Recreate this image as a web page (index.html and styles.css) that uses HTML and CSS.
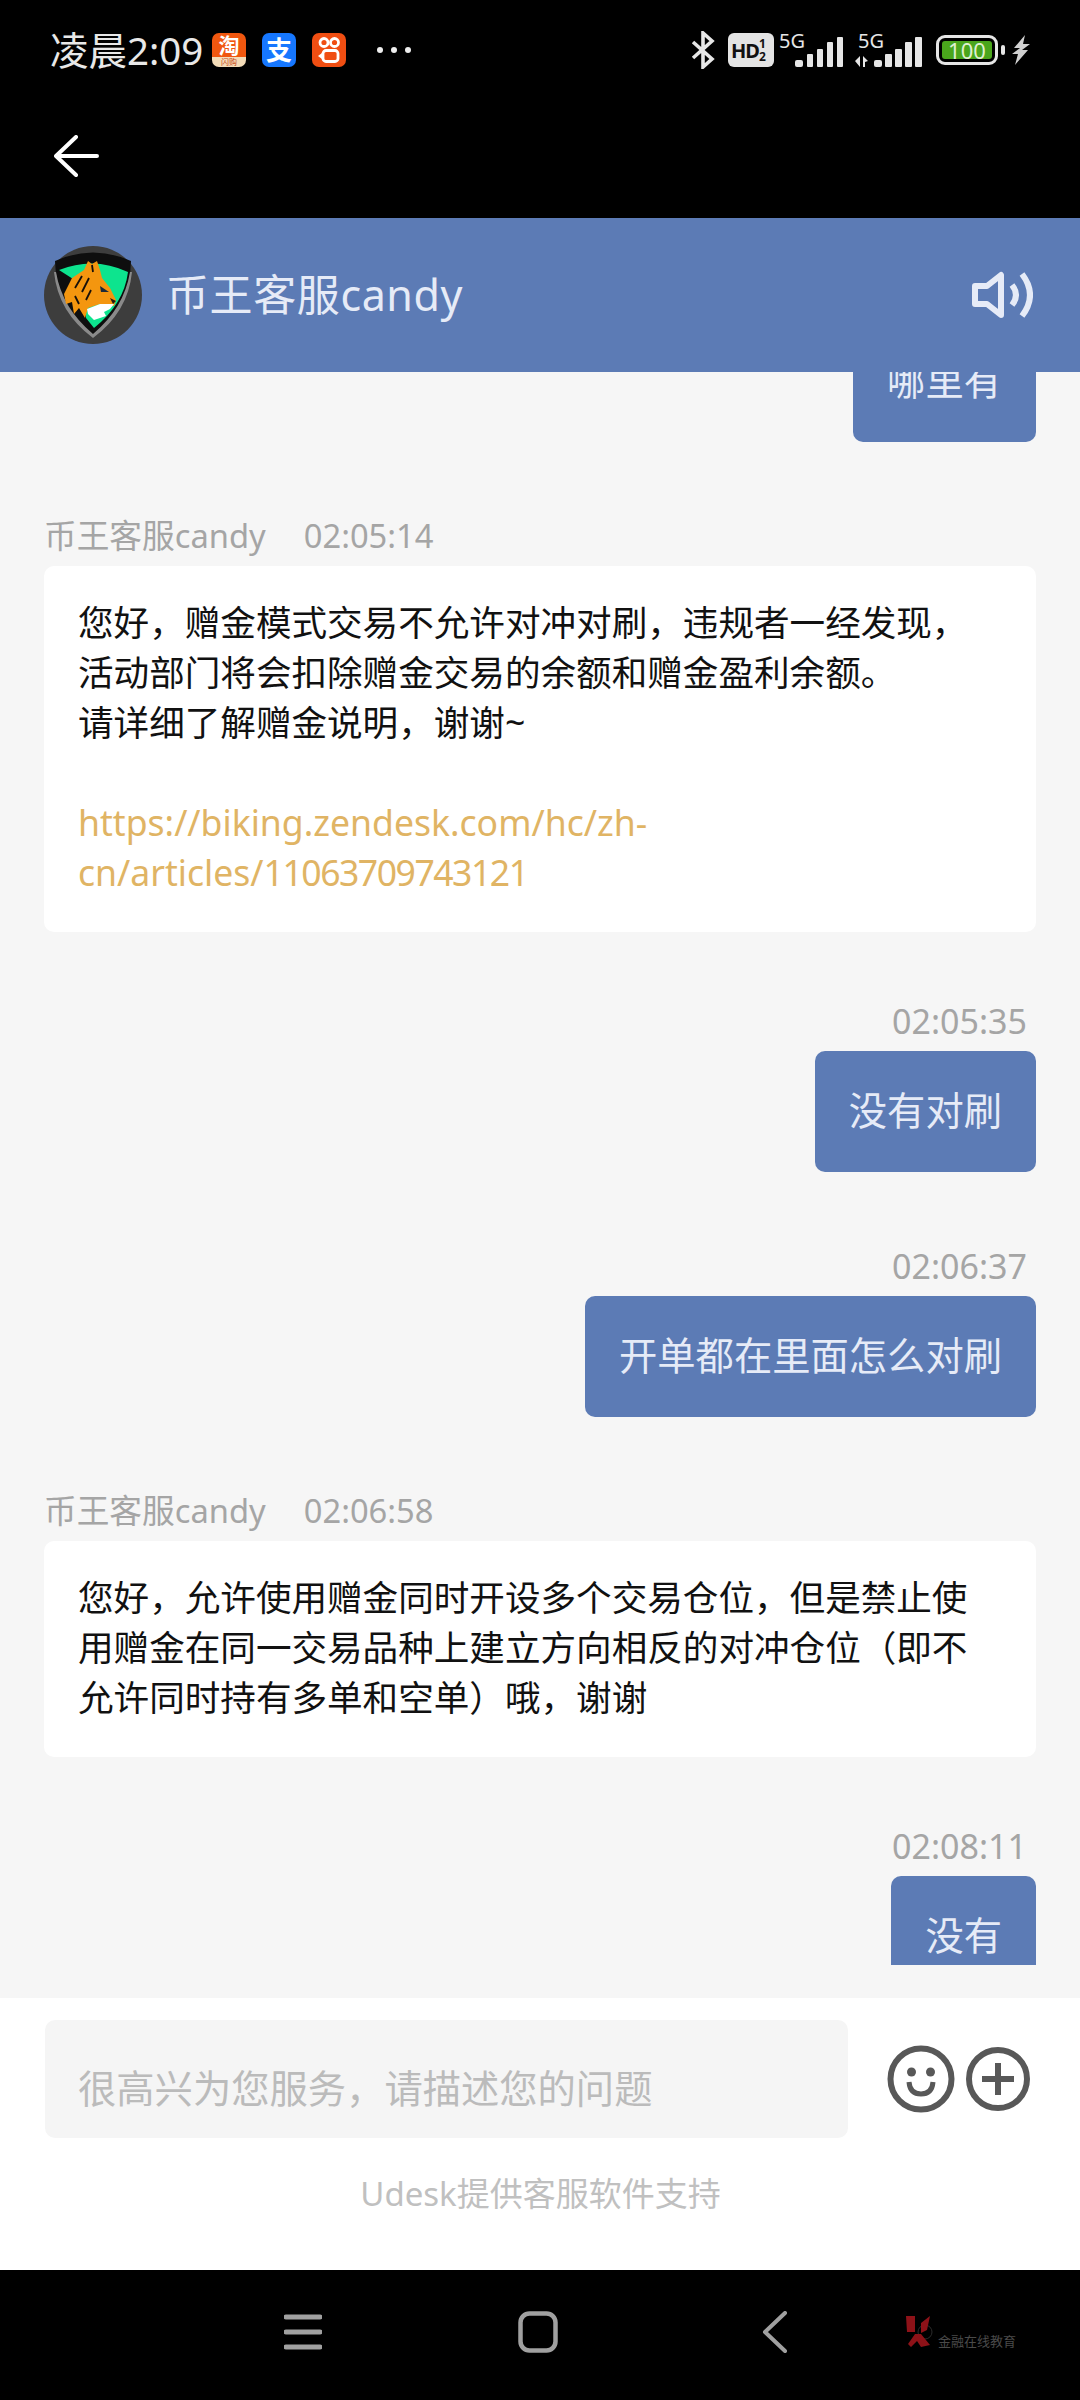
FILE: index.html
```html
<!DOCTYPE html>
<html lang="zh">
<head>
	<meta charset="UTF-8">
	<title>币王客服candy</title>
	<link rel="stylesheet" href="styles.css">
</head>
<body>
	<section class="warp">
		<!-- 状态栏 -->
		<section class="topBlack">
			<div class="statusBar">
				<div class="statusLeft">
					<span class="clock">凌晨2:09</span>
					<span class="appIcon taobao"><b>淘</b><i>闪购</i></span>
					<span class="appIcon alipay">支</span>
					<svg class="appIcon" viewBox="0 0 34 34"><rect width="34" height="34" rx="7" fill="#f04e12"/><g fill="none" stroke="#fff" stroke-width="2.8"><circle cx="12" cy="9.5" r="4"/><circle cx="22.5" cy="9.5" r="4"/><rect x="11" y="17.5" width="15" height="11" rx="3"/></g><path d="M10 20l-4 3 4 3z" fill="#fff"/></svg>
					<svg class="moreDots" viewBox="0 0 36 8"><circle cx="4" cy="4" r="3" fill="#eee"/><circle cx="18" cy="4" r="3" fill="#eee"/><circle cx="32" cy="4" r="3" fill="#eee"/></svg>
				</div>
				<div class="statusRight">
					<svg class="btIcon" viewBox="0 0 26 38"><path d="M3 11l19 17-9 8V2l9 8L3 27" fill="none" stroke="#e6e6e6" stroke-width="3.6"/></svg>
					<span class="hdIcon">HD<small>1<br>2</small></span>
					<span class="signal">
						<em>5G</em>
						<svg viewBox="0 0 48 30"><g fill="#e6e6e6"><rect x="0" y="23" width="8" height="7" rx="2"/><rect x="12" y="17" width="6" height="13" rx="1"/><rect x="22" y="12" width="6" height="18" rx="1"/><rect x="32" y="5" width="6" height="25" rx="1"/><rect x="42" y="0" width="6" height="30" rx="1"/></g></svg>
					</span>
					<span class="signal second">
						<em>5G</em>
						<svg viewBox="0 0 67 30"><g fill="#e6e6e6"><path d="M0 24l5-5v11zM8 19l5 5-3 1v5H8z"/><rect x="19" y="23" width="8" height="7" rx="2"/><rect x="30" y="17" width="7" height="13" rx="1"/><rect x="40" y="12" width="7" height="18" rx="1"/><rect x="50" y="5" width="7" height="25" rx="1"/><rect x="60" y="0" width="7" height="30" rx="1"/></g></svg>
					</span>
					<span class="battery"><span class="batteryFill">100</span></span>
					<span class="batteryNub"></span>
					<svg class="boltIcon" viewBox="0 0 18 30"><path d="M13 0L2 13h6l-8 6h6l-3 11 13-15h-6l8-6h-7z" fill="#d0d0d0"/></svg>
				</div>
			</div>
			<div class="backRow">
				<svg class="backIcon" viewBox="0 0 45 42"><path d="M22 2L2 21l20 19M2 21h41" fill="none" stroke="#fff" stroke-width="4" stroke-linecap="round" stroke-linejoin="round"/></svg>
			</div>
		</section>

		<!-- 标题 -->
		<header class="header">
			<svg class="avatar" viewBox="0 0 98 98">
				<circle cx="49" cy="49" r="49" fill="#3d3d3d"/>
				<path d="M11 15Q49 -2 87 15Q86 62 49 91Q12 62 11 15z" fill="#0e0e0e"/>
				<path d="M49 88Q18 62 12 26L10 26Q14 66 49 92Q84 66 88 26L86 26Q80 62 49 88z" fill="#8a8a8a"/>
				<path d="M15 24Q50 10 84 26Q80 58 50 82L42 72L40 40z" fill="#0de48e"/>
				<path d="M20 48L28 32L40 24L44 15L48 18L53 15L56 24L58 32L66 42L72 54L70 60L56 58L44 62L41 72L35 62L30 68L28 56L22 58z" fill="#f4960f"/>
				<path d="M38 30L31 42M45 32L38 46M31 50L35 58M47 44L42 54M48 19L49 26" stroke="#17100a" stroke-width="1.8" fill="none"/>
				<path d="M43 63L56 58L70 58L66 63L60 66L62 70L50 74L44 68z" fill="#fff"/>
				<path d="M56 40L65 46L57 46z" fill="#1b2a3a"/>
				<path d="M66 52L72 55L69 58z" fill="#2a1a10"/>
			</svg>
			<h3 class="title">币王客服candy</h3>
			<svg class="voiceIcon" viewBox="0 0 61 48"><path d="M3 15h12L29 4v40L15 33H3z" fill="none" stroke="#e6ebf7" stroke-width="6" stroke-linejoin="round"/><path d="M40 14q8 10 0 20M50 3q16 21 0 42" fill="none" stroke="#e6ebf7" stroke-width="6"/></svg>
		</header>

		<!-- 消息列表 -->
		<section class="chatList">
			<div class="msg right firstMsg">
				<div class="bubble">哪里有</div>
			</div>
			<div class="msg left">
				<p class="msgInfo"><span>币王客服candy</span><span>02:05:14</span></p>
				<div class="card">
					<p>您好，赠金模式交易不允许对冲对刷，违规者一经发现，<br>活动部门将会扣除赠金交易的余额和赠金盈利余额。<br>请详细了解赠金说明，谢谢~</p>
					<p class="linkText"><br>https://biking.zendesk.com/hc/zh-<br>cn/articles/<span class="linkNum">11063709743121</span></p>
				</div>
			</div>
			<div class="msg right">
				<p class="msgInfo">02:05:35</p>
				<div class="bubble">没有对刷</div>
			</div>
			<div class="msg right">
				<p class="msgInfo">02:06:37</p>
				<div class="bubble">开单都在里面怎么对刷</div>
			</div>
			<div class="msg left">
				<p class="msgInfo"><span>币王客服candy</span><span>02:06:58</span></p>
				<div class="card">
					<p>您好，允许使用赠金同时开设多个交易仓位，但是禁止使<br>用赠金在同一交易品种上建立方向相反的对冲仓位（即不<br>允许同时持有多单和空单）哦，谢谢</p>
				</div>
			</div>
			<div class="msg right">
				<p class="msgInfo">02:08:11</p>
				<div class="bubble">没有</div>
			</div>
		</section>

		<!-- 输入框 -->
		<footer class="footer">
			<div class="inputRow">
				<div class="inputBox">很高兴为您服务，请描述您的问题</div>
				<svg class="smileIcon" viewBox="0 0 68 68"><circle cx="34" cy="34" r="30.5" fill="none" stroke="#585858" stroke-width="6"/><circle cx="24.500" cy="27" r="4.500" fill="#585858"/><circle cx="43.500" cy="27" r="4.500" fill="#585858"/><path d="M22 37q1 12 12 12t12-12" fill="none" stroke="#585858" stroke-width="5"/></svg>
				<svg class="plusIcon" viewBox="0 0 64 64"><circle cx="32" cy="32" r="29" fill="none" stroke="#585858" stroke-width="6"/><path d="M32 16v32M16 32h32" stroke="#585858" stroke-width="6"/></svg>
			</div>
			<p class="support">Udesk提供客服软件支持</p>
		</footer>

		<!-- 底部导航 -->
		<nav class="navBar">
			<svg class="navMenu" viewBox="0 0 38 36"><path d="M2 3h34M2 18h34M2 33h34" stroke="#a0a0a0" stroke-width="5" stroke-linecap="round"/></svg>
			<svg class="navHome" viewBox="0 0 40 42"><rect x="2.500" y="2.500" width="35" height="37" rx="9" fill="none" stroke="#a0a0a0" stroke-width="4.500"/></svg>
			<svg class="navBack" viewBox="0 0 26 42"><path d="M23 2L3 21l20 19" fill="none" stroke="#a0a0a0" stroke-width="4" stroke-linecap="round" stroke-linejoin="round"/></svg>
			<div class="watermark">
				<svg viewBox="0 0 30 34"><circle cx="22" cy="17" r="7" fill="none" stroke="#2c2c2c" stroke-width="1"/><g fill="#8e1218"><path d="M3 1h9v16H4zM18 8l9-7-3 14-6 3zM12 19l6 0 9 11-9 2-4-6-6 6-3-3z"/></g></svg>
				<span>金融在线教育</span>
			</div>
		</nav>
	</section>
</body>
</html>
```

FILE: styles.css
```css
body{
	margin:0;
	font-family:"Noto Sans","Noto Sans CJK SC",sans-serif;
}
p,h3{
	margin:0;
	font-weight:normal;
}
.warp{
	width:1080px;
	height:2400px;
	display:flex;
	flex-direction:column;
	background:#f6f6f6;
	overflow:hidden;
}
.topBlack{
	height:218px;
	background:#000;
}
.statusBar{
	height:100px;
	display:flex;
	justify-content:space-between;
	align-items:center;
	padding:0 50px;
}
.statusLeft,.statusRight{
	display:flex;
	align-items:center;
}
.clock{
	font-size:38.5px;
	line-height:50px;
	color:#e8e8e8;
	width:162px;
}
.appIcon{
	display:block;
	width:34px;
	height:34px;
	margin-right:16px;
}
.taobao{
	display:flex;
	flex-direction:column;
	align-items:center;
	color:#fff;
}
.taobao b{
	width:100%;
	height:24px;
	background:#f0570f;
	border-radius:7px 7px 0 0;
	font-size:21px;
	line-height:24px;
	text-align:center;
}
.taobao i{
	width:100%;
	height:10px;
	background:#f3dcb8;
	border-radius:0 0 7px 7px;
	color:#c8461a;
	font-size:8px;
	line-height:10px;
	font-style:normal;
	text-align:center;
}
.alipay{
	background:#1677ff;
	border-radius:7px;
	color:#fff;
	font-size:26px;
	font-weight:bold;
	line-height:34px;
	text-align:center;
}
.moreDots{
	width:36px;
	height:8px;
	margin-left:14px;
}
.btIcon{
	width:26px;
	height:38px;
	margin-right:12px;
}
.hdIcon{
	display:flex;
	align-items:center;
	width:46px;
	height:34px;
	border-radius:6px;
	background:#e4e4e4;
	color:#111;
	font-size:20px;
	font-weight:bold;
	letter-spacing:-1px;
	padding-left:3px;
	box-sizing:border-box;
}
.hdIcon small{
	font-size:12px;
	line-height:13px;
	text-align:center;
}
.signal{
	display:block;
	position:relative;
	width:48px;
	height:30px;
	margin:4px 0 0 21px;
}
.signal em{
	position:absolute;
	left:-16px;
	top:-6px;
	font-size:20px;
	line-height:20px;
	font-style:normal;
	color:#e6e6e6;
}
.signal svg{
	display:block;
	width:100%;
	height:100%;
}
.signal.second{
	width:67px;
	margin-left:12px;
}
.signal.second em{
	left:3px;
}
.battery{
	display:block;
	width:62px;
	height:30px;
	margin-left:14px;
	padding:3px;
	box-sizing:border-box;
	border:3px solid #e6e6e6;
	border-radius:9px;
}
.batteryFill{
	display:block;
	height:18px;
	width:50px;
	border-radius:3px;
	background:#4aa51c;
	color:#dff0d0;
	font-size:22px;
	line-height:18px;
	text-align:center;
}
.batteryNub{
	width:4px;
	height:10px;
	margin:0 7px 0 3px;
	border-radius:2px;
	background:#e6e6e6;
}
.boltIcon{
	width:18px;
	height:30px;
}
.backRow{
	padding:35px 0 0 54px;
}
.backIcon{
	display:block;
	width:45px;
	height:42px;
}
.header{
	height:154px;
	flex-shrink:0;
	display:flex;
	align-items:center;
	padding:0 47px 0 44px;
	background:#5c7bb5;
	position:relative;
	z-index:1;
}
.avatar{
	width:98px;
	height:98px;
	margin-right:24px;
}
.title{
	flex:1;
	font-size:43px;
	line-height:50px;
	letter-spacing:.6px;
	color:#e6ebf7;
}
.voiceIcon{
	width:61px;
	height:48px;
}
.chatList{
	height:1593px;
	flex-shrink:0;
	overflow:hidden;
	padding:0 44px;
	box-sizing:border-box;
}
.firstMsg{
	margin-top:-51px;
}
.msg{
	display:flex;
	flex-direction:column;
	margin-bottom:72px;
}
.msg.left{
	margin-bottom:67px;
}
.msg.right{
	align-items:flex-end;
}
.msgInfo{
	font-size:32.7px;
	line-height:44px;
	margin-bottom:8px;
	color:#a5a5a5;
}
.msg.right .msgInfo{
	font-size:34px;
	padding-right:9px;
}
.msgInfo span:first-child{
	margin-right:38px;
}
.bubble{
	padding:34px 34px 36px;
	font-size:38.3px;
	line-height:51px;
	color:#e6ebf7;
	background:#5c7bb5;
	border-radius:10px;
}
.card{
	padding:31px 34px 35px;
	font-size:35.6px;
	line-height:50px;
	color:#111;
	background:#fff;
	border-radius:10px;
}
.linkText{
	color:#e0b464;
}
.linkNum{
	letter-spacing:-1.5px;
}
.footer{
	height:272px;
	margin-top:33px;
	flex-shrink:0;
	padding:22px 44px 0 45px;
	box-sizing:border-box;
	background:#fff;
}
.inputRow{
	display:flex;
	align-items:center;
}
.inputBox{
	display:flex;
	align-items:center;
	width:803px;
	height:118px;
	padding:14px 0 0 33px;
	box-sizing:border-box;
	font-size:38.3px;
	color:#bbb;
	background:#f5f5f5;
	border-radius:10px;
}
.smileIcon{
	width:68px;
	height:68px;
	margin-left:39px;
}
.plusIcon{
	width:64px;
	height:64px;
	margin-left:11px;
}
.support{
	margin-top:33px;
	text-align:center;
	font-size:33px;
	line-height:46px;
	color:#c0c0c0;
}
.navBar{
	height:130px;
	flex-shrink:0;
	display:flex;
	align-items:center;
	background:#000;
	padding:0 0 6px 284px;
	box-sizing:border-box;
}
.navMenu{
	width:38px;
	height:36px;
}
.navHome{
	width:40px;
	height:42px;
	margin-left:196px;
}
.navBack{
	width:26px;
	height:42px;
	margin-left:204px;
}
.watermark{
	display:flex;
	align-items:flex-end;
	margin-left:115px;
}
.watermark svg{
	width:30px;
	height:34px;
}
.watermark span{
	font-size:13px;
	line-height:16px;
	margin-left:5px;
	color:#4a4a4a;
}
```
